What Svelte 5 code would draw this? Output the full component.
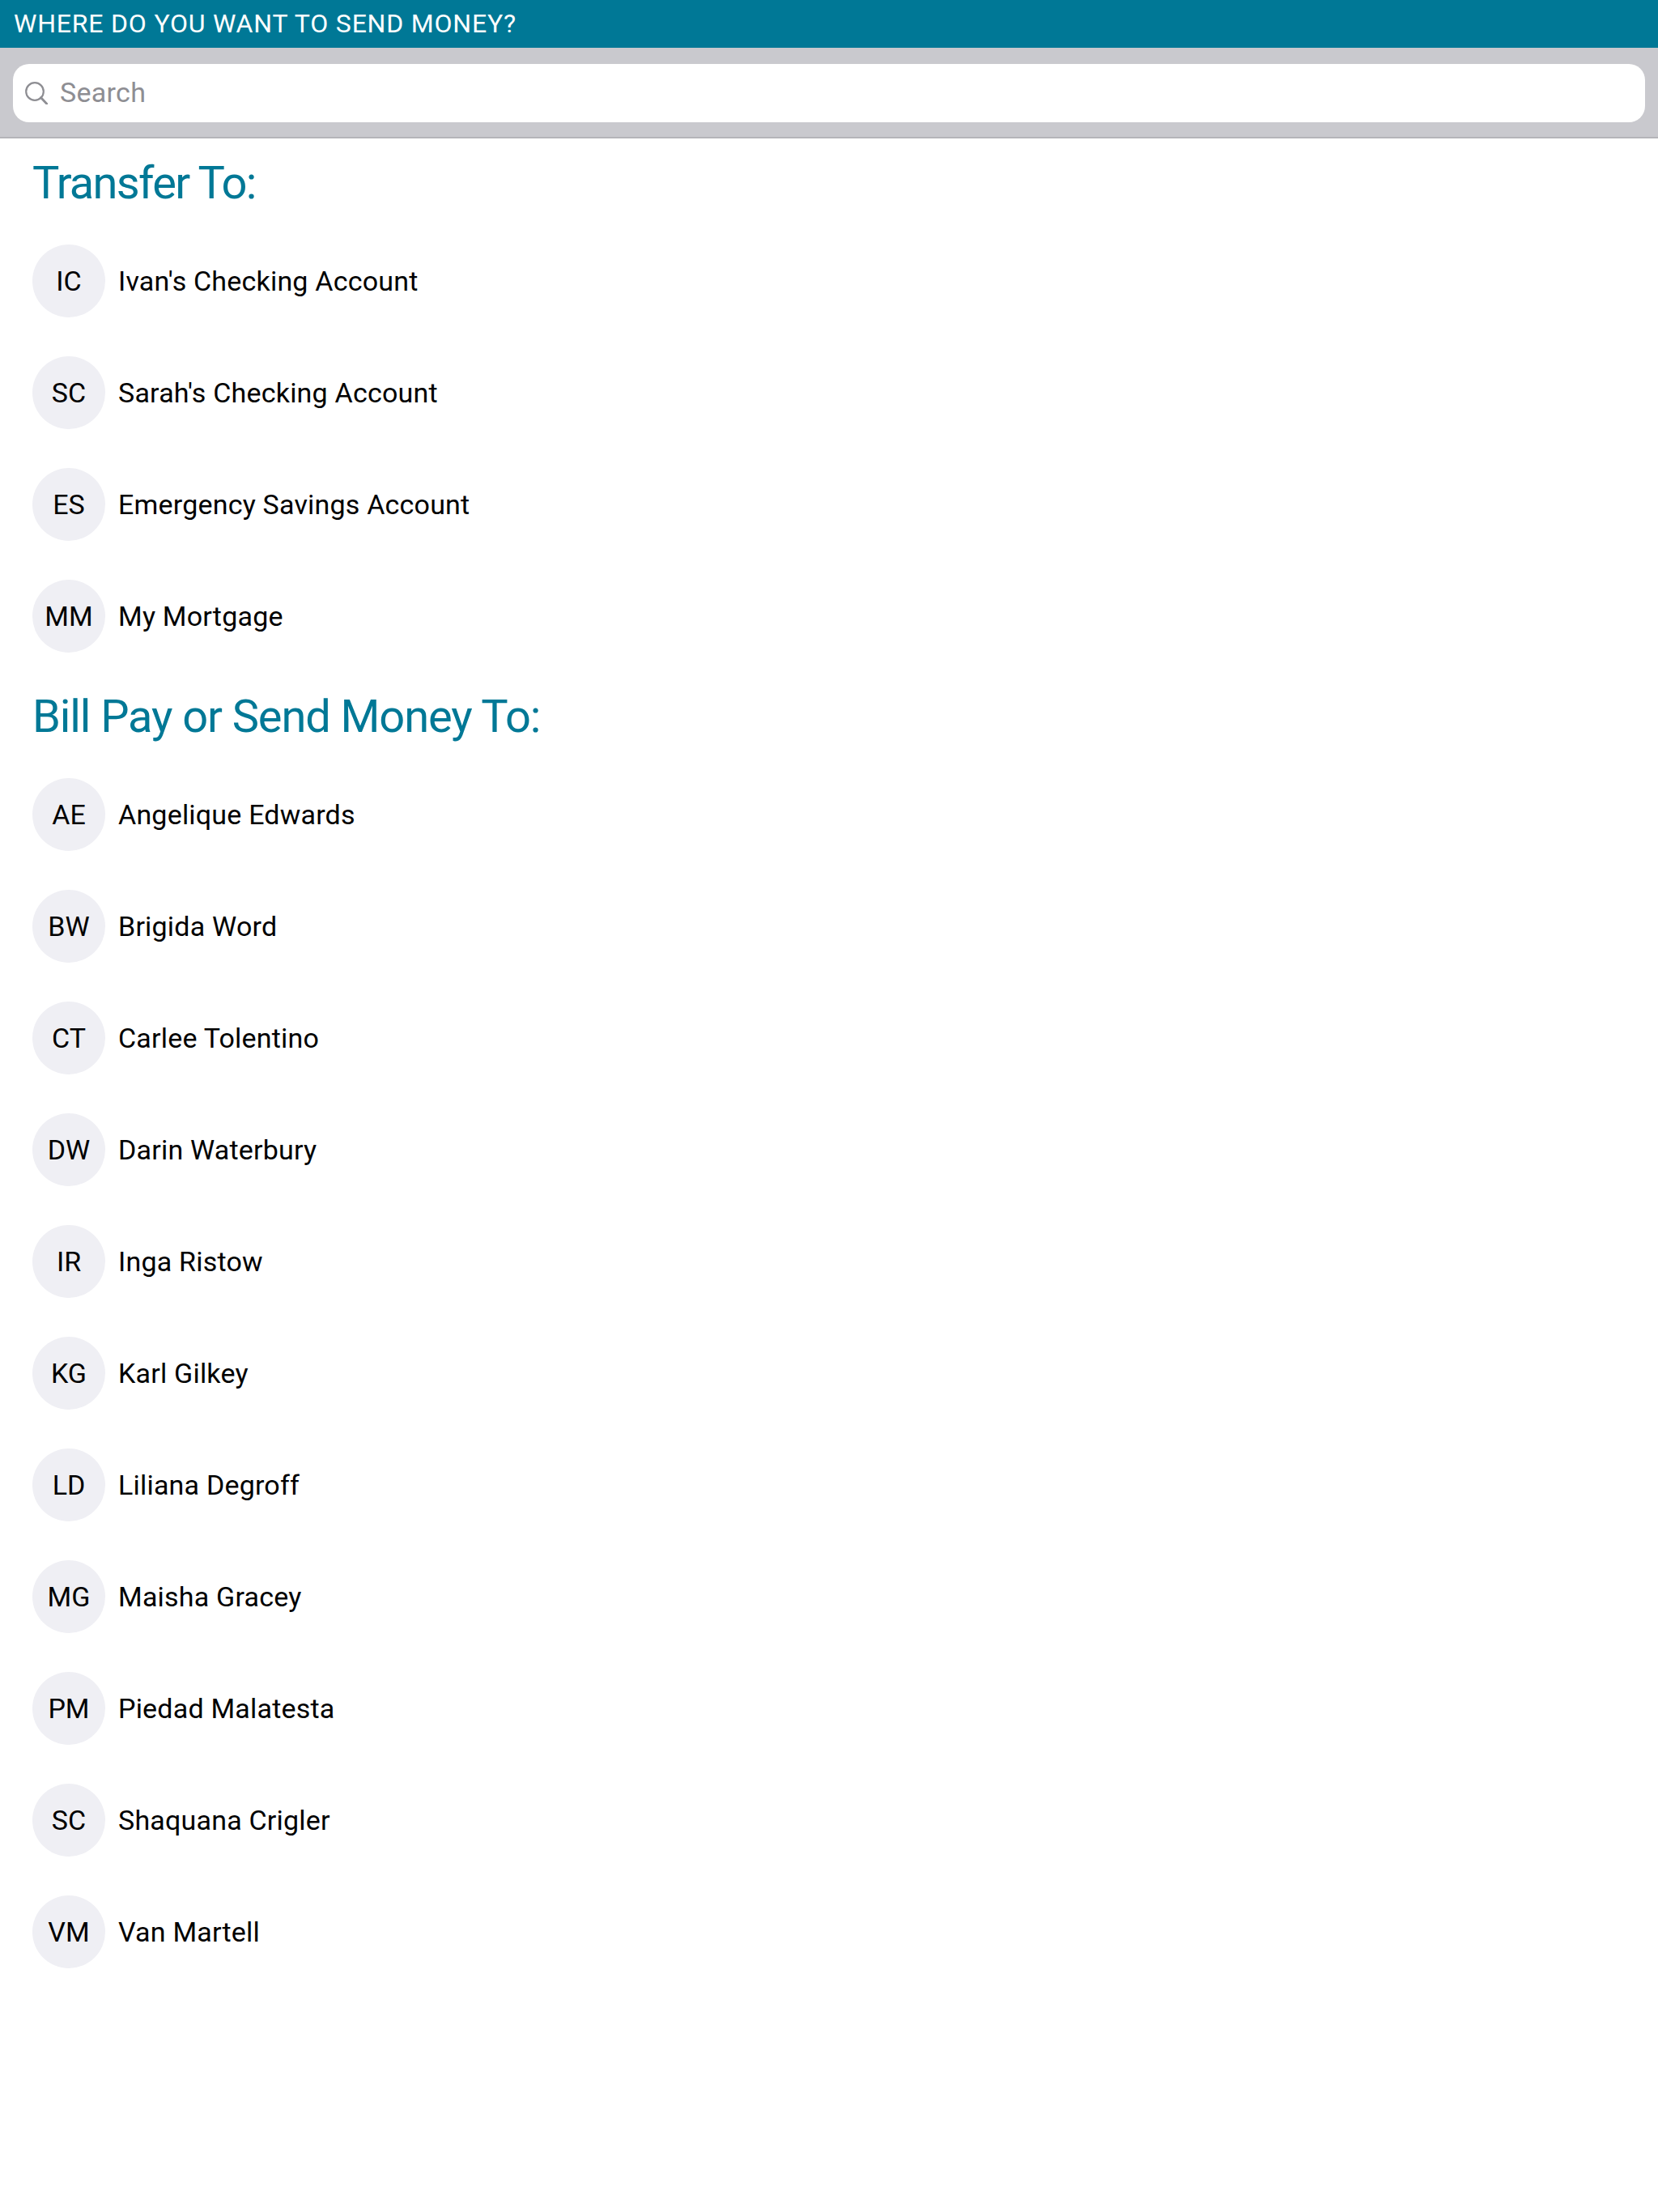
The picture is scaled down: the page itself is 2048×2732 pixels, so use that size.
<script>
    const transfers = [
        { initials: "IC", name: "Ivan's Checking Account" },
        { initials: "SC", name: "Sarah's Checking Account" },
        { initials: "ES", name: "Emergency Savings Account" },
        { initials: "MM", name: "My Mortgage" }
    ];

    const payees = [
        { initials: "AE", name: "Angelique Edwards" },
        { initials: "BW", name: "Brigida Word" },
        { initials: "CT", name: "Carlee Tolentino" },
        { initials: "DW", name: "Darin Waterbury" },
        { initials: "IR", name: "Inga Ristow" },
        { initials: "KG", name: "Karl Gilkey" },
        { initials: "LD", name: "Liliana Degroff" },
        { initials: "MG", name: "Maisha Gracey" },
        { initials: "PM", name: "Piedad Malatesta" },
        { initials: "SC", name: "Shaquana Crigler" },
        { initials: "VM", name: "Van Martell" }
    ];
</script>

<div class="page">
    <div class="title-bar">WHERE DO YOU WANT TO SEND MONEY?</div>

    <div class="search-bar">
        <div class="search-field">
            <svg class="search-icon" viewBox="0 0 28 28" width="28" height="28" fill="none" stroke="#8e8e93" stroke-width="2.2">
                <circle cx="12" cy="12" r="10.8"/>
                <path d="M19.5 19.5 L27 27.5" stroke-linecap="round" stroke-width="2.8"/>
            </svg>
            <span class="placeholder">Search</span>
        </div>
    </div>

    <h2 class="first">Transfer To:</h2>
    <ul>
        {#each transfers as item}
            <li>
                <div class="avatar">{item.initials}</div>
                <div class="name">{item.name}</div>
            </li>
        {/each}
    </ul>

    <h2 class="second">Bill Pay or Send Money To:</h2>
    <ul>
        {#each payees as item}
            <li>
                <div class="avatar">{item.initials}</div>
                <div class="name">{item.name}</div>
            </li>
        {/each}
    </ul>
</div>

<style>
    :global(body) {
        background: #ffffff;
    }

    .page {
        min-height: 2732px;
        background: #ffffff;
        font-family: Roboto, "Liberation Sans", sans-serif;
        color: #000000;
    }

    .title-bar {
        height: 59px;
        line-height: 58px;
        padding-left: 17px;
        background: #007896;
        color: #ffffff;
        font-size: 32px;
        letter-spacing: 0.8px;
    }

    .search-bar {
        height: 112px;
        padding: 20px 16px;
        box-sizing: border-box;
        background: #c9c9ce;
        border-bottom: 2px solid #b4b4b9;
    }

    .search-field {
        height: 72px;
        display: flex;
        align-items: center;
        gap: 15px;
        padding-left: 15px;
        background: #ffffff;
        border-radius: 20px;
    }

    .placeholder {
        color: #8e8e93;
        font-size: 34px;
        letter-spacing: 0.3px;
        line-height: 40px;
        padding-bottom: 3px;
    }

    h2 {
        margin: 0 0 18px;
        padding-left: 40px;
        color: #007896;
        font-size: 56px;
        font-weight: 400;
        line-height: 68px;
        letter-spacing: -1.1px;
    }

    h2.first {
        margin-top: 21px;
        letter-spacing: -1.7px;
    }

    h2.second {
        margin-top: 21px;
    }

    ul {
        list-style: none;
        margin: 0;
        padding: 0;
    }

    li {
        display: flex;
        align-items: center;
        gap: 16px;
        height: 138px;
        padding-left: 40px;
    }

    .avatar {
        width: 90px;
        height: 90px;
        flex-shrink: 0;
        display: flex;
        align-items: center;
        justify-content: center;
        border-radius: 50%;
        background: #efeff4;
        font-size: 34px;
    }

    .name {
        font-size: 34px;
        letter-spacing: 0.2px;
    }
</style>
